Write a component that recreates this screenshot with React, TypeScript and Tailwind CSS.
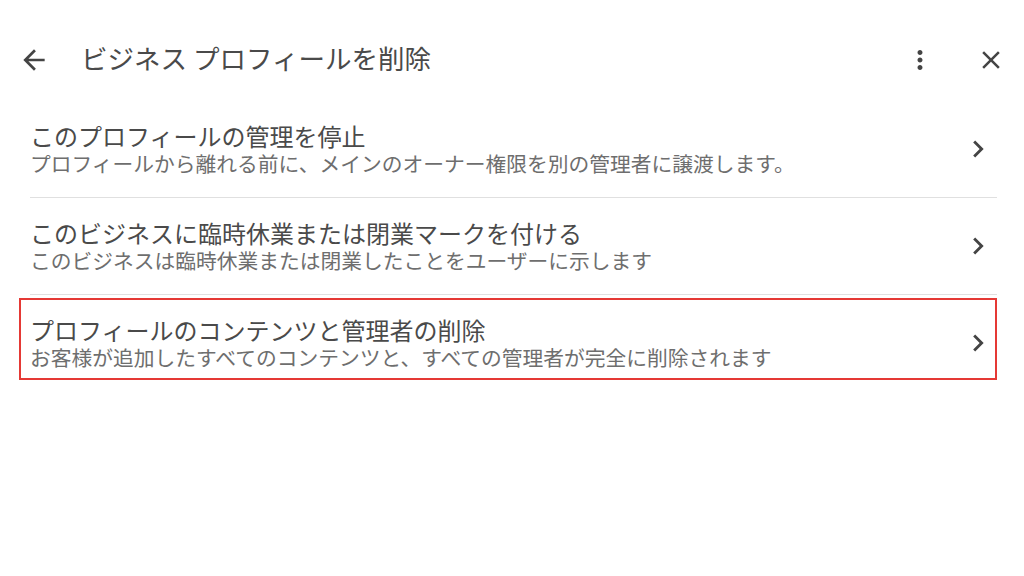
import React from "react";

const items = [
  {
    title: "このプロフィールの管理を停止",
    sub: "プロフィールから離れる前に、メインのオーナー権限を別の管理者に譲渡します。",
  },
  {
    title: "このビジネスに臨時休業または閉業マークを付ける",
    sub: "このビジネスは臨時休業または閉業したことをユーザーに示します",
  },
];

const Chevron = () => (
  <svg viewBox="0 0 24 24" className="w-[34px] h-[34px] fill-[#444]">
    <path d="M10 6L8.59 7.41 13.17 12l-4.58 4.59L10 18l6-6z" />
  </svg>
);

const Row = ({ title, sub }: { title: string; sub: string }) => (
  <div className="flex items-center justify-between pl-[11px] pr-[2px]">
    <div className="flex flex-col">
      <div className="text-[24px] leading-[28px] text-[#4a4a4a]">{title}</div>
      <div className="text-[20.75px] leading-[26px] text-[#6e6e6e]">{sub}</div>
    </div>
    <Chevron />
  </div>
);

const App = () => {
  return (
    <div className="w-[1024px] h-[576px] bg-white font-['Noto_Sans_CJK_JP',sans-serif] overflow-hidden">
      <div className="flex items-center h-[56px] mt-[32px] pl-[18px] pr-[18px]">
        <svg viewBox="0 0 24 24" className="w-[32px] h-[32px] fill-[#444]">
          <path d="M20 11H7.83l5.59-5.59L12 4l-8 8 8 8 1.41-1.41L7.83 13H20v-2z" />
        </svg>
        <div className="ml-[31px] pb-[4px] text-[26.5px] text-[#4a4a4a]">ビジネス プロフィールを削除</div>
        <div className="ml-auto flex items-center gap-[41px]">
          <svg viewBox="0 0 24 24" className="w-[30px] h-[30px] fill-[#444]">
            <path d="M12 8c1.1 0 2-.9 2-2s-.9-2-2-2-2 .9-2 2 .9 2 2 2zm0 2c-1.1 0-2 .9-2 2s.9 2 2 2 2-.9 2-2-.9-2-2-2zm0 6c-1.1 0-2 .9-2 2s.9 2 2 2 2-.9 2-2-.9-2-2-2z" />
          </svg>
          <svg viewBox="0 0 24 24" className="w-[30px] h-[30px] fill-[#444]">
            <path d="M19 6.41L17.59 5 12 10.59 6.41 5 5 6.41 10.59 12 5 17.59 6.41 19 12 13.41 17.59 19 19 17.59 13.41 12z" />
          </svg>
        </div>
      </div>

      <div className="ml-[19px] w-[978px] mt-[13px]">
        {items.map((it) => (
          <div key={it.title}>
            <div className="py-[21px]">
              <Row title={it.title} sub={it.sub} />
            </div>
            <div className="ml-[11px] h-px bg-[#e0e0e0]" />
          </div>
        ))}
        <div className="mt-[3px] border-2 border-[#e53935] pt-[16px] pb-[8px]">
          <div className="-ml-[2px] -mr-[2px]">
            <Row
              title="プロフィールのコンテンツと管理者の削除"
              sub="お客様が追加したすべてのコンテンツと、すべての管理者が完全に削除されます"
            />
          </div>
        </div>
      </div>
    </div>
  );
};

export default App;
